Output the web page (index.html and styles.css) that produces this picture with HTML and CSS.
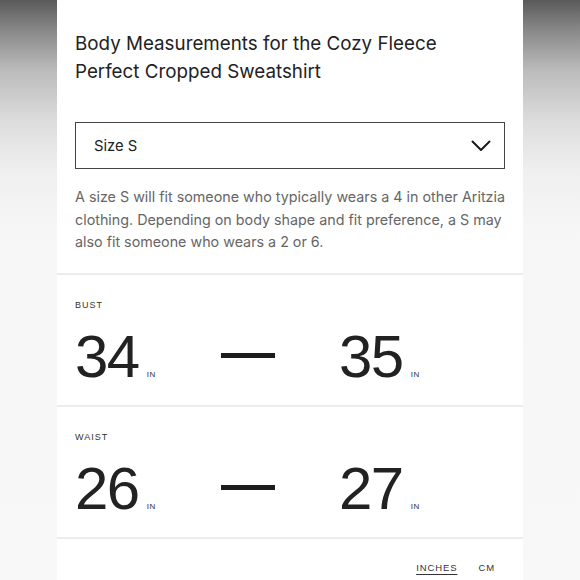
FILE: index.html
```html
<!DOCTYPE html>
<html lang="en">
<head>
<meta charset="utf-8">
<title>Body Measurements</title>
<link rel="stylesheet" href="styles.css">
</head>
<body>
<main class="card">
  <section class="intro">
    <h1 class="title">Body Measurements for the Cozy Fleece Perfect Cropped Sweatshirt</h1>
    <div class="select">
      <span class="select-label">Size S</span>
      <svg class="chevron" width="20" height="12" viewBox="0 0 20 12" aria-hidden="true">
        <path d="M1.5 1.5 L10 10 L18.5 1.5" fill="none" stroke="#1a1a1a" stroke-width="2" stroke-linecap="round" stroke-linejoin="round"/>
      </svg>
    </div>
    <p class="desc">A size S will fit someone who typically wears a 4 in other Aritzia clothing. Depending on body shape and fit preference, a S may also fit someone who wears a 2 or 6.</p>
  </section>
  <section class="measure">
    <div class="label">Bust</div>
    <div class="range">
      <div class="value first"><span class="num">34</span><span class="unit">IN</span></div>
      <div class="dash"></div>
      <div class="value"><span class="num">35</span><span class="unit">IN</span></div>
    </div>
  </section>
  <section class="measure">
    <div class="label">Waist</div>
    <div class="range">
      <div class="value first"><span class="num">26</span><span class="unit">IN</span></div>
      <div class="dash"></div>
      <div class="value"><span class="num">27</span><span class="unit">IN</span></div>
    </div>
  </section>
  <footer class="units">
    <span class="unit-link active">INCHES</span>
    <span class="unit-link">CM</span>
  </footer>
</main>
</body>
</html>
```
FILE: styles.css
```css
* { box-sizing: border-box; }
html, body { height: 100%; }
body {
  margin: 0;
  font-family: Inter, Lato, "Open Sans", Arial, sans-serif;
  color: #222;
  background: linear-gradient(to bottom, #5a5a5a 0px, #888 30px, #bbb 70px, #dcdcdc 120px, #efefef 170px, #f6f6f7 230px, #f8f8f9 100%);
}
.card {
  width: 466px;
  min-height: 580px;
  margin: 0 auto;
  background: #fff;
}
.intro {
  padding: 30px 18px 19px;
  border-bottom: 2px solid #ececec;
}
.title {
  margin: 0;
  font-size: 18.8px;
  font-weight: 400;
  line-height: 28px;
  color: #222;
  padding-right: 40px;
}
.select {
  margin-top: 36px;
  height: 47px;
  border: 1.5px solid #444;
  display: flex;
  align-items: center;
  justify-content: space-between;
  padding: 0 13px 0 18px;
}
.select-label {
  font-size: 14.8px;
  color: #222;
}
.chevron { display: block; }
.desc {
  margin: 17px -4px 0 0;
  font-size: 14.3px;
  line-height: 22.5px;
  color: #666;
}
.measure {
  padding: 24px 18px 18px;
  border-bottom: 2px solid #ececec;
}
.label {
  font-size: 9px;
  line-height: 12px;
  letter-spacing: 1px;
  text-transform: uppercase;
  color: #333;
  font-family: "Liberation Sans", Arial, sans-serif;
}
.range {
  margin-top: 16px;
  display: flex;
  align-items: center;
}
.value {
  display: flex;
  align-items: baseline;
}
.value.first { width: 146px; }
.num {
  font-family: "Liberation Sans", Arial, sans-serif;
  font-size: 60px;
  line-height: 60px;
  letter-spacing: -1.5px;
  color: #222;
}
.unit {
  font-family: "Liberation Sans", Arial, sans-serif;
  font-size: 8px;
  letter-spacing: 0.6px;
  margin-left: 8px;
  color: #333;
}
.dash {
  width: 54px;
  height: 5px;
  background: #1c1c1c;
  margin-right: 64px;
  margin-top: -3px;
}
.units {
  display: flex;
  justify-content: flex-end;
  gap: 21px;
  padding: 23px 28px 0 18px;
}
.unit-link {
  font-family: "Liberation Sans", Arial, sans-serif;
  font-size: 9.5px;
  line-height: 12px;
  letter-spacing: 0.9px;
  color: #333;
}
.unit-link.active {
  text-decoration: underline;
  text-underline-offset: 3px;
}
```
